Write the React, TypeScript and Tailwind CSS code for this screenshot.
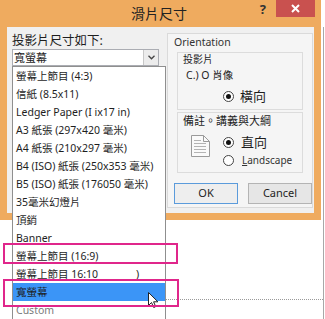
import React from "react";

const sizes: { text: React.ReactNode; muted?: boolean; selected?: boolean }[] = [
  { text: <>螢幕上節目 (4:3)</> },
  { text: <>信紙 (8.5x11)</> },
  { text: <>Ledger Paper (I ix17 in)</> },
  { text: <>A3 紙張 (297x420 毫米)</> },
  { text: <>A4 紙張 (210x297 毫米)</> },
  { text: <>B4 (ISO) 紙張 (250x353 毫米)</> },
  { text: <>B5 (ISO) 紙張 (176050 毫米)</> },
  { text: <>35毫米幻燈片</> },
  { text: <>頂銷</> },
  { text: <>Banner</> },
  { text: <>螢幕上節目 (16:9)</> },
  { text: <>螢幕上節目 16:10<span className="ml-[38px]">)</span></> },
  { text: <>寬螢幕</>, selected: true },
  { text: <>Custom</>, muted: true },
];

function Radio({ checked }: { checked?: boolean }) {
  return (
    <div className="w-[11px] h-[11px] rounded-full border border-[#444] bg-white flex items-center justify-center">
      {checked && <div className="w-[5px] h-[5px] rounded-full bg-[#111]" />}
    </div>
  );
}

function PageIcon() {
  return (
    <svg width="21" height="24" viewBox="0 0 21 24">
      <path d="M1.5 1.5h12l6 6v15h-18z" fill="#fafafa" stroke="#9a9a9a" />
      <path d="M13.5 1.5v6h6" fill="none" stroke="#9a9a9a" />
      <path d="M4 9.5h12M4 12.5h12M4 15.5h12M4 18.5h12M4 6.5h7" stroke="#b4b4b4" />
    </svg>
  );
}

export default function App() {
  return (
    <div className="relative w-[325px] h-[319px] overflow-hidden bg-white text-[#1e1e1e] font-['Noto_Sans','Noto_Sans_CJK_TC',sans-serif]">
      {/* dialog */}
      <div className="flex">
        <div className="w-[321px] bg-[#efab5f]">
          <div className="flex h-[27px] items-start">
            <div className="ml-[131px] mt-[5px] text-[14px] leading-[18px] text-[#222]">滑片尺寸</div>
            <div className="ml-auto mr-[10px] mt-[1px] text-[13px] font-bold leading-[16px] text-[#333]">?</div>
            <div className="mr-[6px] flex h-[17px] w-[39px] items-center justify-center bg-[#c9514f]">
              <svg width="9" height="9" viewBox="0 0 9 9">
                <path d="M1 1l7 7M8 1l-7 7" stroke="#fff" strokeWidth="2" />
              </svg>
            </div>
          </div>
          <div className="px-[7px] pb-[7px]">
            <div className="flex h-[186px] bg-[#f0f0f0]">
              <div className="w-[160px] pl-[5px] pt-[6px]">
                <div className="h-[16px] text-[12.5px] leading-[16px]">投影片尺寸如下:</div>
                <div className="flex h-[17px] w-[147px] items-center border border-[#abadb3] bg-white">
                  <span className="pl-[1px] text-[11px] leading-[15px]">寬螢幕</span>
                  <div className="ml-auto flex h-[15px] w-[15px] items-center justify-center border-l border-[#c8c8c8] bg-[#ececec]">
                    <svg width="7" height="5" viewBox="0 0 7 5">
                      <path d="M0.5 0.8l3 3 3-3" fill="none" stroke="#444" strokeWidth="1.3" />
                    </svg>
                  </div>
                </div>
              </div>
              <div className="mt-[6px] flex h-[175px] w-[146px] flex-col border border-[#dadada] bg-[#f5f5f5]">
                <div className="pl-[6px] pt-[1px] text-[10.5px] leading-[14px] text-[#333]">Orientation</div>
                <div className="ml-[9px] mt-[3px] h-[58px] w-[126px] border border-[#dcdcdc]">
                  <div className="pl-[5px] text-[10px] leading-[12px]">投影片</div>
                  <div className="mt-[4px] pl-[8px] text-[10.5px] leading-[12px]">C.) O 肖像</div>
                  <div className="mt-[7px] flex items-center pl-[45px]">
                    <Radio checked />
                    <span className="ml-[6px] text-[13px] leading-[16px]">橫向</span>
                  </div>
                </div>
                <div className="ml-[9px] mt-[2px] h-[61px] w-[126px] border border-[#dcdcdc]">
                  <div className="pl-[5px] pt-[1px] text-[11px] leading-[13px]">備註。講義與大綱</div>
                  <div className="mt-[7px] flex pl-[12px]">
                    <PageIcon />
                    <div className="ml-[12px] flex flex-col">
                      <div className="flex items-center">
                        <Radio checked />
                        <span className="ml-[7px] text-[13px] leading-[16px]">直向</span>
                      </div>
                      <div className="mt-[3px] flex items-center">
                        <Radio />
                        <span className="ml-[8px] text-[10px] leading-[14px] text-[#333]">
                          <span className="underline">L</span>andscape
                        </span>
                      </div>
                    </div>
                  </div>
                </div>
                <div className="mt-[10px] flex pl-[6px]">
                  <div className="flex h-[21px] w-[64px] items-center justify-center border border-[#5b9bdb] bg-[#eeeeee] text-[11px]">
                    OK
                  </div>
                  <div className="ml-[10px] flex h-[21px] w-[64px] items-center justify-center border border-[#b4b4b4] bg-[#e6e6e6] text-[11px]">
                    Cancel
                  </div>
                </div>
              </div>
            </div>
          </div>
        </div>
        <div className="flex w-[4px] pl-[2px] pt-[27px]">
          <div className="w-px bg-[#a8a8a8]" />
        </div>
      </div>

      {/* area behind the dropdown, below the dialog */}
      <div className="flex h-[99px]">
        <div className="w-[166px]" />
        <div className="h-[80px] w-[157px] border-b border-dotted border-[#9a9a9a]" />
        <div className="w-px bg-[#a8a8a8]" />
      </div>

      {/* open dropdown list */}
      <div className="absolute left-[12px] top-[66px] w-[154px] border border-[#8f8f8f] bg-white">
        {sizes.map((s, i) => (
          <div
            key={i}
            className={`flex h-[18px] items-center pl-[3px] text-[10.5px] leading-[14px] whitespace-nowrap ${
              s.selected ? "bg-[#3b95f7]" : ""
            } ${s.muted ? "text-[#7a7a7a]" : ""}`}
          >
            {s.text}
          </div>
        ))}
      </div>

      {/* mouse pointer */}
      <svg className="absolute left-[148px] top-[292px]" width="11" height="16" viewBox="0 0 11 16">
        <path d="M0.5 0.5v13l3-3 2.2 5 2-0.9-2.1-4.8h4.3z" fill="#fff" stroke="#222" strokeWidth="1" />
      </svg>

      {/* callout boxes */}
      <div className="absolute left-[3px] top-[243px] h-[21px] w-[175px] border-2 border-[#e0268b]" />
      <div className="absolute left-[3px] top-[279px] h-[28px] w-[176px] border-2 border-[#e0268b]" />
    </div>
  );
}
